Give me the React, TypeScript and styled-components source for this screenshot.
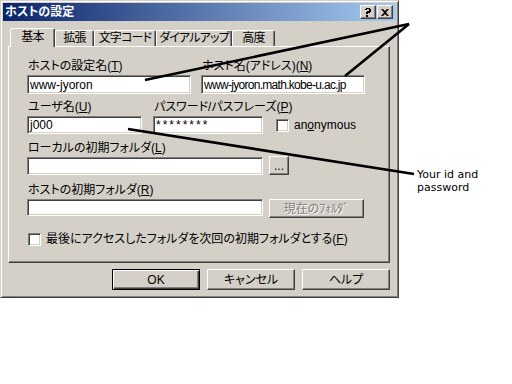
import React from "react";
import styled, { createGlobalStyle } from "styled-components";

const Global = createGlobalStyle`
  html, body { margin: 0; padding: 0; background: #ffffff; }
  body { font-family: "Liberation Sans", "Noto Sans CJK JP", sans-serif; font-size: 12px; }
`;

const UI = `"Liberation Sans", "Noto Sans CJK JP", sans-serif`;

const Page = styled.div`
  position: relative;
  width: 512px;
  height: 384px;
  display: flex;
  align-items: flex-start;
`;

const Dialog = styled.div`
  box-sizing: border-box;
  width: 399px;
  height: 298px;
  background: #d4d0c8;
  border: 1px solid;
  border-color: #d4d0c8 #404040 #404040 #d4d0c8;
  box-shadow: inset 1px 1px #ffffff, inset -1px -1px #808080;
  padding: 2px;
  display: flex;
  flex-direction: column;
  font-family: ${UI};
  font-size: 12px;
  color: #000;
  font-feature-settings: "palt";
`;

const TitleBar = styled.div`
  height: 18px;
  background: linear-gradient(to right, #0a246a, #a6caf0);
  display: flex;
  align-items: center;
  padding: 0 3px 0 2px;
`;

const TitleText = styled.div`
  flex: 1;
  color: #fff;
  font-weight: bold;
  font-size: 12px;
  line-height: 14px;
`;

const CapButton = styled.div<{ gap?: number }>`
  box-sizing: border-box;
  width: 16px;
  height: 14px;
  background: #d4d0c8;
  border: 1px solid;
  border-color: #ffffff #404040 #404040 #ffffff;
  box-shadow: inset -1px -1px #808080;
  display: flex;
  align-items: center;
  justify-content: center;
  margin-left: ${(p) => p.gap ?? 0}px;
`;

const Body = styled.div`
  padding: 7px 0 0 5px;
  display: flex;
  flex-direction: column;
`;

const TabStrip = styled.div`
  display: flex;
  align-items: flex-end;
  height: 18px;
  padding-left: 2px;
  position: relative;
  z-index: 1;
`;

const Tab = styled.div<{ w: number; active?: boolean }>`
  box-sizing: border-box;
  width: ${(p) => p.w}px;
  height: ${(p) => (p.active ? 19 : 16)}px;
  margin-bottom: ${(p) => (p.active ? -1 : 0)}px;
  background: #d4d0c8;
  border-top: 1px solid #ffffff;
  border-left: 1px solid #ffffff;
  border-right: 1px solid #404040;
  box-shadow: inset -1px 0 #808080;
  border-radius: 2px 2px 0 0;
  display: flex;
  justify-content: center;
  padding-top: ${(p) => (p.active ? 2 : 1)}px;
  line-height: 13px;
  letter-spacing: -0.8px;
  white-space: nowrap;
`;

const Panel = styled.div`
  box-sizing: border-box;
  width: 382px;
  height: 217px;
  border: 1px solid;
  border-color: #ffffff #404040 #404040 #ffffff;
  box-shadow: inset -1px -1px #808080;
  padding: 12px 0 0 18px;
  display: flex;
  flex-direction: column;
`;

const Row = styled.div<{ top?: number }>`
  display: flex;
  align-items: flex-end;
  margin-top: ${(p) => p.top ?? 0}px;
`;

const Field = styled.div<{ w: number; right?: number }>`
  display: flex;
  flex-direction: column;
  width: ${(p) => p.w}px;
  margin-right: ${(p) => p.right ?? 0}px;
`;

const Label = styled.div`
  height: 14px;
  line-height: 14px;
  padding-left: 1px;
  margin-bottom: 2px;
  white-space: nowrap;
`;

const Mn = styled.span`
  text-decoration: underline;
`;

const Input = styled.div<{ h?: number; ls?: number }>`
  box-sizing: border-box;
  height: ${(p) => p.h ?? 18}px;
  background: #ffffff;
  border: 1px solid;
  border-color: #808080 #ffffff #ffffff #808080;
  box-shadow: inset 1px 1px #404040, inset -1px -1px #d4d0c8;
  padding: 0 2px;
  display: flex;
  align-items: center;
  font-size: 12px;
  letter-spacing: ${(p) => p.ls ?? 0}px;
  line-height: 14px;
  white-space: nowrap;
  overflow: hidden;
`;

const Check = styled.div`
  box-sizing: border-box;
  width: 13px;
  height: 13px;
  background: #ffffff;
  border: 1px solid;
  border-color: #808080 #ffffff #ffffff #808080;
  box-shadow: inset 1px 1px #404040, inset -1px -1px #d4d0c8;
  flex: none;
`;

const CheckLine = styled.div<{ left?: number; gap: number; bottom?: number }>`
  display: flex;
  align-items: center;
  margin-left: ${(p) => p.left ?? 0}px;
  margin-bottom: ${(p) => p.bottom ?? 0}px;
  gap: ${(p) => p.gap}px;
  white-space: nowrap;
  line-height: 14px;
`;

const Btn = styled.div<{ w: number; h: number; disabled?: boolean; def?: boolean; drop?: number }>`
  box-sizing: border-box;
  width: ${(p) => p.w}px;
  height: ${(p) => p.h}px;
  margin-bottom: ${(p) => -(p.drop ?? 0)}px;
  background: #d4d0c8;
  border: 1px solid;
  border-color: ${(p) => (p.def ? "#000000" : "#ffffff #404040 #404040 #ffffff")};
  box-shadow: ${(p) =>
    p.def
      ? "inset 1px 1px #ffffff, inset -1px -1px #404040, inset -2px -2px #808080"
      : "inset -1px -1px #808080"};
  display: flex;
  align-items: center;
  justify-content: center;
  line-height: 14px;
  white-space: nowrap;
  color: ${(p) => (p.disabled ? "#808080" : "#000")};
  text-shadow: ${(p) => (p.disabled ? "1px 1px #ffffff" : "none")};
  flex: none;
`;

const ButtonRow = styled.div`
  display: flex;
  justify-content: flex-end;
  gap: 7px;
  width: 382px;
  margin-top: 6px;
`;

const Note = styled.div`
  margin: 168px 0 0 18px;
  font-family: "DejaVu Sans", sans-serif;
  font-size: 11px;
  line-height: 13px;
  color: #000;
`;

const Overlay = styled.svg`
  position: absolute;
  left: 0;
  top: 0;
  pointer-events: none;
`;

export default function App() {
  return (
    <>
      <Global />
      <Page>
        <Dialog>
          <TitleBar>
            <TitleText>ホストの設定</TitleText>
            <CapButton>
              <svg width="8" height="9" viewBox="0 0 8 9">
                <path d="M1 1h1v-1h4v1h1v3h-1v1h-2v1h-2v-2h1v-1h2v-2h-2v1h-2z" fill="#000" />
                <rect x="2" y="7" width="2" height="2" fill="#000" />
              </svg>
            </CapButton>
            <CapButton gap={1}>
              <svg width="8" height="7" viewBox="0 0 8 7">
                <path d="M0 0h2l2 2 2-2h2l-3 3.5 3 3.5h-2l-2-2-2 2h-2l3-3.5z" fill="#000" />
              </svg>
            </CapButton>
          </TitleBar>
          <Body>
            <TabStrip>
              <Tab w={45} active>基本</Tab>
              <Tab w={39}>拡張</Tab>
              <Tab w={62}>文字コード</Tab>
              <Tab w={76}>ダイアルアップ</Tab>
              <Tab w={43}>高度</Tab>
            </TabStrip>
            <Panel>
              <Row>
                <Field w={164} right={10}>
                  <Label>ホストの設定名(<Mn>T</Mn>)</Label>
                  <Input h={19}>www-jyoron</Input>
                </Field>
                <Field w={164}>
                  <Label>ホスト名(アドレス)(<Mn>N</Mn>)</Label>
                  <Input h={19} ls={-0.7}>www-jyoron.math.kobe-u.ac.jp</Input>
                </Field>
              </Row>
              <Row top={6}>
                <Field w={115} right={11}>
                  <Label>ユーザ名(<Mn>U</Mn>)</Label>
                  <Input>j000</Input>
                </Field>
                <Field w={110}>
                  <Label>パスワード/パスフレーズ(<Mn>P</Mn>)</Label>
                  <Input ls={2}>********</Input>
                </Field>
                <CheckLine left={13} gap={5} bottom={2}>
                  <Check />
                  <span>
                    an<Mn>o</Mn>nymous
                  </span>
                </CheckLine>
              </Row>
              <Row top={7}>
                <Field w={236} right={6}>
                  <Label>ローカルの初期フォルダ(<Mn>L</Mn>)</Label>
                  <Input>&nbsp;</Input>
                </Field>
                <Btn w={20} h={19}>...</Btn>
              </Row>
              <Row top={8}>
                <Field w={236} right={6}>
                  <Label>ホストの初期フォルダ(<Mn>R</Mn>)</Label>
                  <Input h={17}>&nbsp;</Input>
                </Field>
                <Btn w={95} h={19} disabled drop={2}>
                  現在のﾌｫﾙﾀﾞ
                </Btn>
              </Row>
              <Row top={16}>
                <CheckLine left={1} gap={5}>
                  <Check />
                  <span>
                    最後にアクセスしたフォルダを次回の初期フォルダとする(<Mn>F</Mn>)
                  </span>
                </CheckLine>
              </Row>
            </Panel>
            <ButtonRow>
              <Btn w={88} h={21} def>OK</Btn>
              <Btn w={88} h={21}>キャンセル</Btn>
              <Btn w={88} h={21}>ヘルプ</Btn>
            </ButtonRow>
          </Body>
        </Dialog>
        <Note>
          Your id and
          <br />
          password
        </Note>
        <Overlay width="512" height="384" viewBox="0 0 512 384">
          <g stroke="#000" strokeWidth="2.6" fill="none" strokeLinecap="butt">
            <line x1="145" y1="80" x2="409" y2="24" />
            <line x1="345" y1="76" x2="409" y2="24" />
            <line x1="128" y1="129" x2="414" y2="174" />
          </g>
        </Overlay>
      </Page>
    </>
  );
}
